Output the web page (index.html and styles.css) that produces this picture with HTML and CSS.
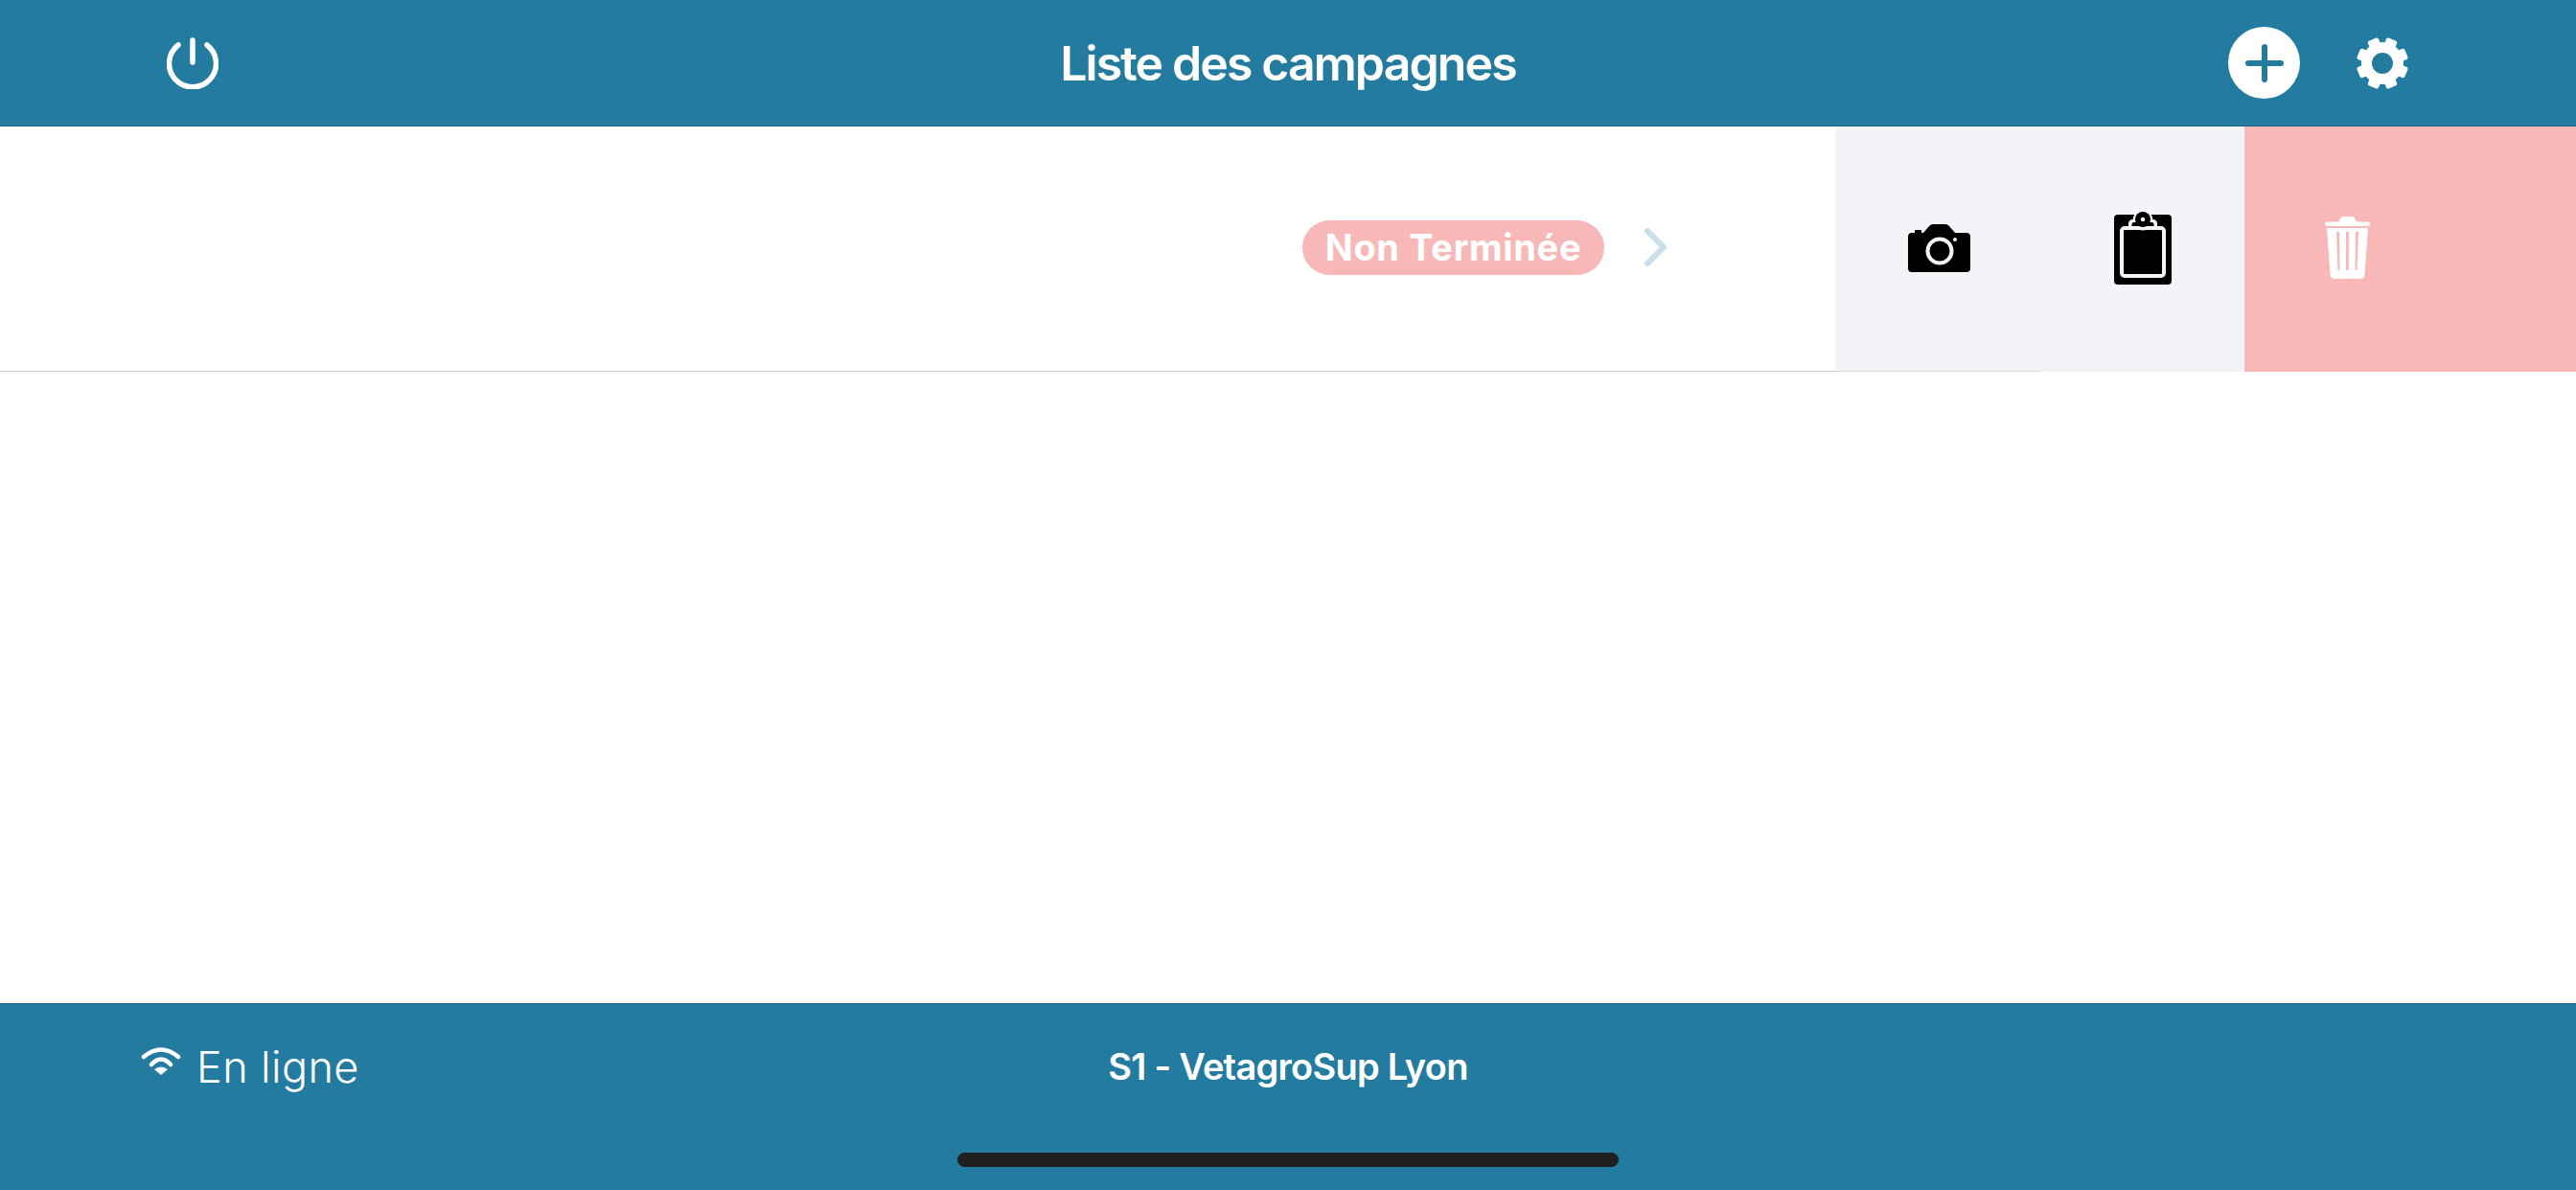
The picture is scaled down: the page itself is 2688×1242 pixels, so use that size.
FILE: index.html
```html
<!DOCTYPE html>
<html lang="fr">
<head>
<meta charset="utf-8">
<title>Liste des campagnes</title>
<link rel="stylesheet" href="styles.css">
</head>
<body>
<div class="app">
  <header class="bar top-bar">
    <div class="bar-left">
      <svg class="icon-power" viewBox="0 0 54 54"><path d="M12 8 A24.500 24.500 0 1 0 42 8" fill="none" stroke="#fff" stroke-width="5.500" stroke-linecap="round"/><path d="M27 3 V26" fill="none" stroke="#fff" stroke-width="5.500" stroke-linecap="round"/></svg>
    </div>
    <h1 class="title">Liste des campagnes</h1>
    <div class="bar-right">
      <button class="add-button" type="button"><svg class="icon-plus" viewBox="0 0 40 40"><path d="M3 20 H37 M20 3 V37" fill="none" stroke="#247ba0" stroke-width="6" stroke-linecap="round"/></svg></button>
      <svg class="icon-gear" viewBox="-27 -27 54 54">
        <circle r="16.5" fill="none" stroke="#fff" stroke-width="11"/>
        <g fill="#fff">
          <rect x="-6" y="-27" width="12" height="13" rx="2.5" transform="rotate(22.5)"/>
          <rect x="-6" y="-27" width="12" height="13" rx="2.5" transform="rotate(67.5)"/>
          <rect x="-6" y="-27" width="12" height="13" rx="2.5" transform="rotate(112.5)"/>
          <rect x="-6" y="-27" width="12" height="13" rx="2.5" transform="rotate(157.5)"/>
          <rect x="-6" y="-27" width="12" height="13" rx="2.5" transform="rotate(202.5)"/>
          <rect x="-6" y="-27" width="12" height="13" rx="2.5" transform="rotate(247.5)"/>
          <rect x="-6" y="-27" width="12" height="13" rx="2.5" transform="rotate(292.5)"/>
          <rect x="-6" y="-27" width="12" height="13" rx="2.5" transform="rotate(337.5)"/>
        </g>
      </svg>
    </div>
  </header>

  <main class="list">
    <div class="row">
      <div class="row-main">
        <span class="badge">Non Terminée</span>
        <svg class="icon-chevron" viewBox="0 0 23 40"><path d="M3 3 L20 20 L3 37" fill="none" stroke="#c8dee9" stroke-width="6" stroke-linecap="round" stroke-linejoin="round"/></svg>
      </div>
      <div class="action action-camera">
        <svg class="icon-camera" viewBox="0 0 65 50">
          <path d="M4 9 H7 V7 Q7 6 8 6 H13 Q14 6 14 7 V9 H16 L22 2 Q24 0 26 0 H39 Q41 0 43 2 L49 9 H61 Q65 9 65 13 V46 Q65 50 61 50 H4 Q0 50 0 46 V13 Q0 9 4 9 Z" fill="#000"/>
          <circle cx="33" cy="28" r="12.5" fill="none" stroke="#f3f4f8" stroke-width="4"/>
          <circle cx="49" cy="16" r="2" fill="#f3f4f8"/>
        </svg>
      </div>
      <div class="action action-notes">
        <svg class="icon-clipboard" viewBox="0 0 60 76">
          <rect x="0" y="3" width="60" height="73" rx="4" fill="#000"/>
          <rect x="8" y="17" width="44" height="50" rx="3" fill="#000" stroke="#f3f4f8" stroke-width="4"/>
          <path d="M15 17 V13 Q15 8 20 8 H40 Q45 8 45 13 V17 Z" fill="#f3f4f8"/>
          <circle cx="30" cy="9" r="10.500" fill="#f3f4f8"/>
          <path d="M18.500 15 V13 Q18.500 11 21 11 H39 Q41.500 11 41.500 13 V15 Z" fill="#000"/>
          <circle cx="30" cy="8" r="8" fill="#000"/>
          <circle cx="30" cy="8" r="2.300" fill="#f3f4f8"/>
        </svg>
      </div>
      <div class="action action-delete">
        <svg class="icon-trash" viewBox="0 0 47 66">
          <path d="M2 5.500 H14 L16 2 Q17 0 19 0 H28 Q30 0 31 2 L33 5.500 H45 Q47 5.500 47 8 Q47 10 45 10 H2 Q0 10 0 8 Q0 5.500 2 5.500 Z" fill="#fff"/>
          <path fill-rule="evenodd" fill="#fff" d="M2 12 H45 L41.500 61 Q41 65 37 65 H10 Q6 65 5.500 61 Z M12 16 L13.500 56 H15.500 L15 16 Z M22 16 V56 H25 V16 Z M32 16 L31.500 56 H33.500 L35 16 Z"/>
        </svg>
      </div>
    </div>
  </main>

  <footer class="bar bottom-bar">
    <div class="bottom-row">
      <div class="status">
        <svg class="icon-wifi" viewBox="0 0 42 30">
          <path d="M3 11 Q21 -4 39 11" fill="none" stroke="#fff" stroke-width="4.500" stroke-linecap="round"/>
          <path d="M11 19 Q21 8 31 19" fill="none" stroke="#fff" stroke-width="4.500" stroke-linecap="round"/>
          <path d="M14 24 Q21 19 28 24 L21 30 Z" fill="#fff"/>
        </svg>
        <span class="status-text">En ligne</span>
      </div>
      <div class="site">S1 - VetagroSup Lyon</div>
      <div></div>
    </div>
    <div class="home-indicator"></div>
  </footer>
</div>
</body>
</html>
```

FILE: styles.css
```css
* { box-sizing: border-box; }
html, body { margin: 0; padding: 0; }
body { font-family: Inter, "Liberation Sans", sans-serif; background: #fff; color: #fff; }
.app { width: 2688px; height: 1242px; display: flex; flex-direction: column; overflow: hidden; }
.bar { background: #247ba0; }
.top-bar {
  height: 132px;
  border-bottom: 1px solid #1c6380;
  display: grid;
  grid-template-columns: 1fr auto 1fr;
  align-items: center;
}
.bar-left { padding-left: 174px; display: flex; align-items: center; }
.bar-right { padding-right: 175px; display: flex; justify-content: flex-end; align-items: center; gap: 59px; }
.title { margin: 0; font-size: 50px; font-weight: 600; line-height: 1; letter-spacing: -1.9px; }
.icon-power { width: 54px; height: 54px; display: block; }
.add-button {
  width: 75px; height: 75px; padding: 0; border: 0; border-radius: 50%;
  background: #fff; display: flex; align-items: center; justify-content: center;
}
.icon-plus { width: 40px; height: 40px; display: block; }
.icon-gear { width: 54px; height: 54px; display: block; }

.list { flex: 1; background: #fff; }
.row { height: 256px; display: flex; }
.row-main {
  width: 1915px;
  border-bottom: 1px solid #c8c8c8;
  padding-right: 176px;
  display: flex; align-items: center; justify-content: flex-end; gap: 42px;
  padding-bottom: 3px;
}
.badge {
  height: 57px; width: 315px;
  background: #f8b8b8; border-radius: 29px;
  display: flex; align-items: center; justify-content: center;
  font-size: 38px; font-weight: 700; letter-spacing: 0.65px;
}
.icon-chevron { width: 23px; height: 40px; display: block; }
.action { display: flex; align-items: center; padding-bottom: 2px; }
.action-camera {
  width: 214px; background: #f3f4f8; border-bottom: 1px solid #d8d8da;
  padding-left: 76px; padding-bottom: 1px;
}
.action-notes { width: 213px; background: #f3f4f8; padding-left: 77px; }
.action-delete { flex: 1; background: #f8b8b8; padding-left: 84px; }
.icon-camera { width: 65px; height: 50px; display: block; }
.icon-clipboard { width: 60px; height: 76px; display: block; }
.icon-trash { width: 47px; height: 66px; display: block; }

.bottom-bar {
  height: 195px;
  border-top: 1px solid #1c6380;
  display: flex; flex-direction: column; align-items: center;
}
.bottom-row {
  width: 100%;
  height: 130px;
  display: grid;
  grid-template-columns: 1fr auto 1fr;
  align-items: center;
}
.status { padding-left: 147px; display: flex; align-items: center; gap: 16px; }
.icon-wifi { width: 42px; height: 30px; display: block; margin-top: -12px; }
.status-text { font-size: 45px; font-weight: 350; line-height: 1; letter-spacing: 0.4px; }
.site { font-size: 38px; font-weight: 600; line-height: 1; letter-spacing: -0.75px; }
.home-indicator { width: 690px; height: 15px; margin-top: 25px; background: #1f1f1f; border-radius: 8px; }
```
